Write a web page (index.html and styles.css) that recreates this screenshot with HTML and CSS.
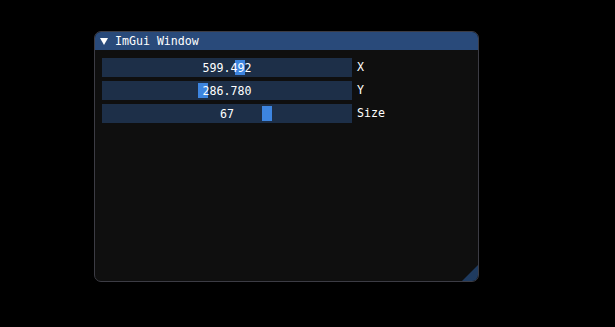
FILE: index.html
```html
<!DOCTYPE html>
<html lang="en">
<head>
  <meta charset="UTF-8">
  <title>ImGui Window</title>
  <link rel="stylesheet" href="styles.css">
</head>
<body>
  <div class="janela">
    <div class="titulo">
      <span class="seta"></span>
      <span>ImGui Window</span>
    </div>
    <div class="conteudo">
      <div class="linha">
        <div class="slider"><span class="grab" style="left:133px"></span><span class="valor">599.492</span></div>
        <span class="rotulo">X</span>
      </div>
      <div class="linha">
        <div class="slider"><span class="grab" style="left:96px"></span><span class="valor">286.780</span></div>
        <span class="rotulo">Y</span>
      </div>
      <div class="linha">
        <div class="slider"><span class="grab" style="left:160px"></span><span class="valor">67</span></div>
        <span class="rotulo">Size</span>
      </div>
    </div>
    <div class="grip"></div>
  </div>
</body>
</html>
```

FILE: styles.css
```css
/* tema escuro estilo ImGui */
:root {
  --titulo: #294a7a;
  --fundo: #0f0f0f;
  --frame: #1d2f48;
  --grab: #3d85e0;
  --borda: #3c3c44;
  --grip: #1f3b60;
}
* { box-sizing: border-box; margin:0; padding:0; }
body { background:#000; padding:31px 0 0 94px; font-family:"DejaVu Sans Mono", "Liberation Mono", monospace; font-size:11.6px; color:#fff; }
.janela { position:relative; width:385px; height:251px; background:var(--fundo); border:1px solid var(--borda); border-radius:7px; overflow:hidden; }
.titulo { display:flex; align-items:center; gap:7px; height:18px; padding-left:5px; background:var(--titulo); line-height:18px; }
.seta { width:0; height:0; border-left:4px solid transparent; border-right:4px solid transparent; border-top:7px solid #fff; }
.conteudo { display:flex; flex-direction:column; gap:4px; padding:8px 7px; }
.linha { display:flex; align-items:center; gap:5px; }
.slider { position:relative; width:250px; height:19px; background:var(--frame); display:flex; align-items:center; justify-content:center; }
.grab { position:absolute; top:2px; width:10px; height:15px; background:var(--grab); }
.valor { position:relative; }
.rotulo { line-height:19px; }
.grip { position:absolute; right:0; bottom:0; width:16px; height:16px; background:var(--grip); clip-path:polygon(100% 0, 100% 100%, 0 100%); }
```
